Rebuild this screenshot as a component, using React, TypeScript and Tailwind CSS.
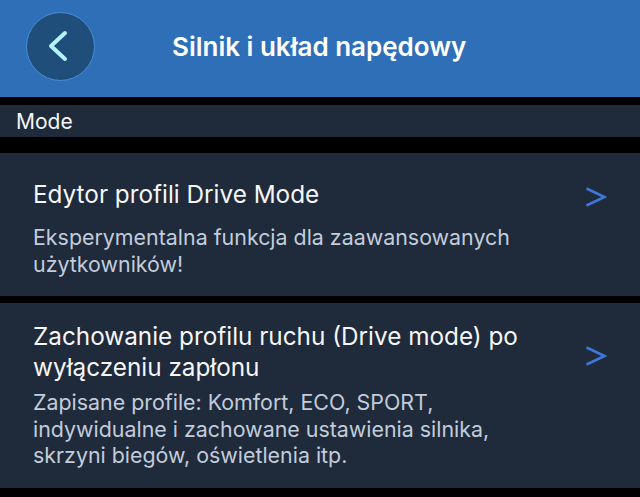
const FONT = "font-['Inter','Noto_Sans',sans-serif]";

function Arrow({ className }: { className: string }) {
  return (
    <svg width="21" height="20" viewBox="0 0 21 20" fill="none" stroke="#3f78dc" strokeWidth="2.5" className={`shrink-0 ${className}`}>
      <path d="M0.5 1.5 L18.5 10 L0.5 18.5" />
    </svg>
  );
}

interface RowProps {
  title: string[];
  desc: string[];
  className: string;
  descGap: string;
  arrowGap: string;
}

function Row({ title, desc, className, descGap, arrowGap }: RowProps) {
  return (
    <div className={`flex shrink-0 items-start justify-between bg-[#1f2a3a] pl-[33px] pr-[33px] ${className}`}>
      <div>
        <div className="text-[24.3px] leading-[31px] text-[#f5f6f8]">
          {title.map((t) => (
            <div key={t} className="whitespace-nowrap">{t}</div>
          ))}
        </div>
        <div className={`text-[21.4px] leading-[26.5px] text-[#c2ccdc] ${descGap}`}>
          {desc.map((t) => (
            <div key={t} className="whitespace-nowrap">{t}</div>
          ))}
        </div>
      </div>
      <Arrow className={arrowGap} />
    </div>
  );
}

export default function App() {
  return (
    <div className={`flex h-[497px] w-[640px] flex-col overflow-hidden bg-black ${FONT}`}>
      <header className="flex h-[97px] shrink-0 items-center bg-[#2f6fb7] pb-[5px] pl-[26px]">
        <div className="flex h-[69px] w-[69px] items-center justify-center rounded-full border border-[#4a8fd6] bg-[#1f4e7a]">
          <svg width="20" height="32" viewBox="0 0 20 32" fill="none" stroke="#b4f3fb" strokeWidth="4" strokeLinecap="round" strokeLinejoin="round" className="mr-[5px]">
            <path d="M17 3 L3 16 L17 29" />
          </svg>
        </div>
        <h1 className="ml-[77px] whitespace-nowrap text-[26px] font-semibold text-white">Silnik i układ napędowy</h1>
      </header>

      <div className="mt-[8px] flex h-[32px] shrink-0 items-center bg-[#1f2a3a] pl-[16px] pt-[1px] text-[21px] text-[#f5f6f8]">Mode</div>

      <Row
        className="mt-[16px] h-[143px] pt-[26px]"
        descGap="mt-[14px]"
        arrowGap="mt-[8px]"
        title={['Edytor profili Drive Mode']}
        desc={['Eksperymentalna funkcja dla zaawansowanych', 'użytkowników!']}
      />
      <Row
        className="mt-[7px] h-[185px] pt-[18px]"
        descGap="mt-[6px]"
        arrowGap="mt-[25px]"
        title={['Zachowanie profilu ruchu (Drive mode) po', 'wyłączeniu zapłonu']}
        desc={['Zapisane profile: Komfort, ECO, SPORT,', 'indywidualne i zachowane ustawienia silnika,', 'skrzyni biegów, oświetlenia itp.']}
      />
    </div>
  );
}
